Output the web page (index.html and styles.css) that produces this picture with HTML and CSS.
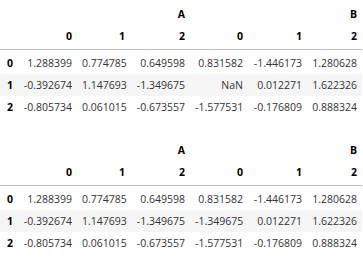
FILE: index.html
```html
<!DOCTYPE html>
<html>
<head>
<meta charset="utf-8">
<link rel="stylesheet" href="styles.css">
</head>
<body>
<div class="output">
<table class="dataframe">
  <colgroup>
    <col class="c-idx"><col class="c-neg"><col class="c-pos"><col class="c-neg2"><col class="c-mid"><col class="c-neg"><col class="c-last">
  </colgroup>
  <thead>
    <tr class="lvl0">
      <th></th>
      <th colspan="3">A</th>
      <th colspan="3">B</th>
    </tr>
    <tr class="lvl1">
      <th></th>
      <th>0</th><th>1</th><th>2</th><th>0</th><th>1</th><th>2</th>
    </tr>
  </thead>
  <tbody>
    <tr><th>0</th><td>1.288399</td><td>0.774785</td><td>0.649598</td><td>0.831582</td><td>-1.446173</td><td>1.280628</td></tr>
    <tr><th>1</th><td>-0.392674</td><td>1.147693</td><td>-1.349675</td><td>NaN</td><td>0.012271</td><td>1.622326</td></tr>
    <tr><th>2</th><td>-0.805734</td><td>0.061015</td><td>-0.673557</td><td>-1.577531</td><td>-0.176809</td><td>0.888324</td></tr>
  </tbody>
</table>

<table class="dataframe">
  <colgroup>
    <col class="c-idx"><col class="c-neg"><col class="c-pos"><col class="c-neg2"><col class="c-mid"><col class="c-neg"><col class="c-last">
  </colgroup>
  <thead>
    <tr class="lvl0">
      <th></th>
      <th colspan="3">A</th>
      <th colspan="3">B</th>
    </tr>
    <tr class="lvl1">
      <th></th>
      <th>0</th><th>1</th><th>2</th><th>0</th><th>1</th><th>2</th>
    </tr>
  </thead>
  <tbody>
    <tr><th>0</th><td>1.288399</td><td>0.774785</td><td>0.649598</td><td>0.831582</td><td>-1.446173</td><td>1.280628</td></tr>
    <tr><th>1</th><td>-0.392674</td><td>1.147693</td><td>-1.349675</td><td>-1.349675</td><td>0.012271</td><td>1.622326</td></tr>
    <tr><th>2</th><td>-0.805734</td><td>0.061015</td><td>-0.673557</td><td>-1.577531</td><td>-0.176809</td><td>0.888324</td></tr>
  </tbody>
</table>
</div>
</body>
</html>
```

FILE: styles.css
```css
html, body {
  margin: 0;
  padding: 0;
  background: #ffffff;
}

.output {
  padding-top: 3px;
  display: flex;
  flex-direction: column;
  gap: 21px;
}

.dataframe {
  border-collapse: collapse;
  border-spacing: 0;
  table-layout: fixed;
  width: 362px;
  font-family: "Open Sans", "Noto Sans", sans-serif;
  font-size: 10.5px;
  color: #333333;
}

.c-idx { width: 18px; }
.c-neg { width: 59px; }
.c-pos { width: 53px; }
.c-neg2 { width: 60px; }
.c-mid { width: 58px; }
.c-last { width: 55px; }

.dataframe th,
.dataframe td {
  text-align: right;
  vertical-align: middle;
  padding: 0 5px;
  white-space: nowrap;
  line-height: 14px;
}

.dataframe th {
  font-weight: bold;
  color: #000000;
}

.dataframe thead {
  border-bottom: 1px solid #bdbdbd;
}

.lvl0 th { height: 22px; }
.lvl1 th { height: 22px; padding-bottom: 2px; }

.dataframe tbody tr th,
.dataframe tbody tr td { height: 22px; }

.dataframe tbody tr:first-child th,
.dataframe tbody tr:first-child td { padding-top: 2px; }

.dataframe tbody tr:nth-child(even) {
  background: #f5f5f5;
}
```
